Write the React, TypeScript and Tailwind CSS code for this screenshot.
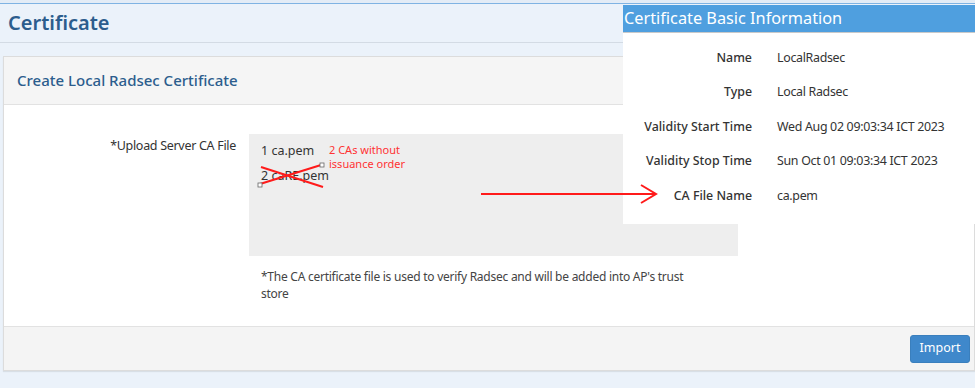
import React from "react";

const font = { fontFamily: '"Noto Sans", "Open Sans", sans-serif' };

const info: [string, string][] = [
  ["Name", "LocalRadsec"],
  ["Type", "Local Radsec"],
  ["Validity Start Time", "Wed Aug 02 09:03:34 ICT 2023"],
  ["Validity Stop Time", "Sun Oct 01 09:03:34 ICT 2023"],
  ["CA File Name", "ca.pem"],
];

function InfoCard() {
  return (
    <div className="absolute left-[623px] top-[5px] h-[219px] w-[352px] bg-white">
      <div className="flex h-[28px] items-center border-b border-[#c9c9c9] bg-[#4f9fdf] pl-px text-[16.3px] leading-none text-white">
        Certificate Basic Information
      </div>
      <div className="pt-[8px]">
        {info.map(([k, v]) => (
          <div key={k} className="flex h-[34.5px] items-center gap-[25px] text-[12.4px] text-[#333]">
            <span className="w-[129px] text-right font-medium">{k}</span>
            <span className="tracking-[-0.3px]">{v}</span>
          </div>
        ))}
      </div>
    </div>
  );
}

function Marks() {
  return (
    <svg className="pointer-events-none absolute left-0 top-0" width="975" height="388">
      <line x1="260" y1="184" x2="321" y2="165" stroke="#ff1a1a" strokeWidth="2" />
      <line x1="261" y1="167" x2="323" y2="187" stroke="#ff1a1a" strokeWidth="2" />
      <rect x="258" y="183" width="4" height="4" fill="white" stroke="#666" strokeWidth="0.8" />
      <rect x="320" y="163" width="4" height="4" fill="white" stroke="#666" strokeWidth="0.8" />
      <line x1="481" y1="194" x2="655" y2="194" stroke="#ff1a1a" strokeWidth="2" />
      <polyline points="641,185 656,194 641,203" fill="none" stroke="#ff1a1a" strokeWidth="2" />
    </svg>
  );
}

export default function App() {
  return (
    <div className="relative h-[388px] w-[975px] overflow-hidden bg-[#ebf2fa]" style={font}>
      <div className="h-[4px] border-b border-[#7fb3e3] bg-[#e3ecf6]" />
      <div className="flex h-[39px] items-center border-b border-[#d3dbe4] px-[8px] text-[20px] font-semibold text-[#2c5d8d]">
        Certificate
      </div>
      <div className="ml-[3px] mt-[13px] border border-[#dcdcdc] bg-white shadow-[0_1px_1px_rgba(0,0,0,0.08)]">
        <div className="flex h-[48px] items-center border-b border-[#e2e2e2] bg-[#f5f5f5] px-[13px] text-[15px] font-medium text-[#2c5d8d]">
          Create Local Radsec Certificate
        </div>
        <div className="flex h-[221px] text-[12.5px] text-[#333]">
          <div className="w-[232px] pt-[32px] text-right tracking-[-0.3px]">*Upload Server CA File</div>
          <div className="ml-[13px] mt-[29px] w-[489px]">
            <div className="flex h-[122px] bg-[#eeeeee] px-[12px] pt-[4px]">
              <div className="w-[68px] whitespace-nowrap text-[12.5px] leading-[25px] text-[#333]">
                <div>1 ca.pem</div>
                <div>2 caRE.pem</div>
              </div>
              <div className="pt-[5px] text-[11px] leading-[14px] text-[#ff3333]">
                2 CAs without
                <br />
                issuance order
              </div>
            </div>
            <p className="mt-[12px] w-[462px] pl-[12px] text-[12px] leading-[17px] tracking-[-0.25px] text-[#444]">
              *The CA certificate file is used to verify Radsec and will be added into AP's trust store
            </p>
          </div>
        </div>
        <div className="flex h-[44px] items-center justify-end border-t border-[#e2e2e2] bg-[#f4f4f4] pr-[4px]">
          <button className="h-[28px] w-[60px] rounded-[3px] border border-[#3a7fbd] bg-[#3f88cb] text-[12.5px] text-white">
            Import
          </button>
        </div>
      </div>
      <InfoCard />
      <Marks />
    </div>
  );
}
